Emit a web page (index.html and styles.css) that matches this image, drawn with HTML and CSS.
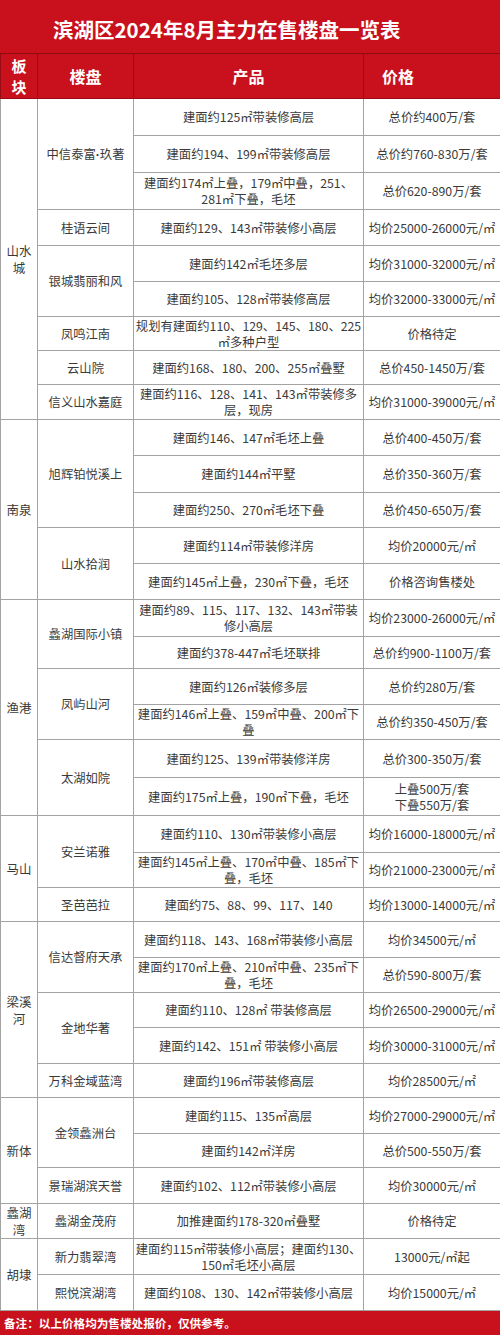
FILE: index.html
```html
<!DOCTYPE html>
<html lang="zh">
<head>
<meta charset="utf-8">
<title>滨湖区2024年8月主力在售楼盘一览表</title>
<link rel="stylesheet" href="styles.css">
</head>
<body>
<div class="sheet">
  <div class="title">滨湖区2024年8月主力在售楼盘一览表</div>
  <table class="grid">
    <colgroup>
      <col class="c-area"><col class="c-name"><col class="c-prod"><col class="c-price">
    </colgroup>
    <thead>
      <tr class="head">
        <th class="area-h">板<br>块</th>
        <th>楼盘</th>
        <th>产品</th>
        <th class="price-h">价格</th>
      </tr>
    </thead>
    <tbody>
      <tr class="h37"><td class="area" rowspan="9">山水<br>城</td><td rowspan="3">中信泰富<span class="dot">·</span>玖著</td><td>建面约125㎡带装修高层</td><td>总价约400万/套</td></tr>
      <tr class="h37"><td>建面约194、199㎡带装修高层</td><td>总价约760-830万/套</td></tr>
      <tr class="h37"><td>建面约174㎡上叠，179㎡中叠，251、<br>281㎡下叠，毛坯</td><td>总价620-890万/套</td></tr>
      <tr class="h36"><td>桂语云间</td><td>建面约129、143㎡带装修小高层</td><td>均价25000-26000元/㎡</td></tr>
      <tr class="h36"><td rowspan="2">银城翡丽和风</td><td>建面约142㎡毛坯多层</td><td>均价31000-32000元/㎡</td></tr>
      <tr class="h35"><td>建面约105、128㎡带装修高层</td><td>均价32000-33000元/㎡</td></tr>
      <tr class="h34"><td>凤鸣江南</td><td>规划有建面约110、129、145、180、225<br>㎡多种户型</td><td>价格待定</td></tr>
      <tr class="h34"><td>云山院</td><td>建面约168、180、200、255㎡叠墅</td><td>总价450-1450万/套</td></tr>
      <tr class="h35"><td>信义山水嘉庭</td><td>建面约116、128、141、143㎡带装修多<br>层，现房</td><td>均价31000-39000元/㎡</td></tr>

      <tr class="h36"><td class="area" rowspan="5">南泉</td><td rowspan="3">旭辉铂悦溪上</td><td>建面约146、147㎡毛坯上叠</td><td>总价400-450万/套</td></tr>
      <tr class="h37"><td>建面约144㎡平墅</td><td>总价350-360万/套</td></tr>
      <tr class="h35"><td>建面约250、270㎡毛坯下叠</td><td>总价450-650万/套</td></tr>
      <tr class="h36"><td rowspan="2">山水拾润</td><td>建面约114㎡带装修洋房</td><td>均价20000元/㎡</td></tr>
      <tr class="h36"><td>建面约145㎡上叠，230㎡下叠，毛坯</td><td>价格咨询售楼处</td></tr>

      <tr class="h37"><td class="area" rowspan="6">渔港</td><td rowspan="2">蠡湖国际小镇</td><td>建面约89、115、117、132、143㎡带装<br>修小高层</td><td>均价23000-26000元/㎡</td></tr>
      <tr class="h32"><td>建面约378-447㎡毛坯联排</td><td>总价约900-1100万/套</td></tr>
      <tr class="h36"><td rowspan="2">凤屿山河</td><td>建面约126㎡装修多层</td><td>总价约280万/套</td></tr>
      <tr class="h35"><td>建面约146㎡上叠、159㎡中叠、200㎡下<br>叠</td><td>总价约350-450万/套</td></tr>
      <tr class="h38"><td rowspan="2">太湖如院</td><td>建面约125、139㎡带装修洋房</td><td>总价300-350万/套</td></tr>
      <tr class="h38"><td>建面约175㎡上叠，190㎡下叠，毛坯</td><td>上叠500万/套<br>下叠550万/套</td></tr>

      <tr class="h37"><td class="area" rowspan="3">马山</td><td rowspan="2">安兰诺雅</td><td>建面约110、130㎡带装修小高层</td><td>均价16000-18000元/㎡</td></tr>
      <tr class="h35"><td>建面约145㎡上叠、170㎡中叠、185㎡下<br>叠，毛坯</td><td>均价21000-23000元/㎡</td></tr>
      <tr class="h34"><td>圣芭芭拉</td><td>建面约75、88、99、117、140</td><td>均价13000-14000元/㎡</td></tr>

      <tr class="h36"><td class="area" rowspan="5">梁溪<br>河</td><td rowspan="2">信达督府天承</td><td>建面约118、143、168㎡带装修小高层</td><td>均价34500元/㎡</td></tr>
      <tr class="h35"><td>建面约170㎡上叠、210㎡中叠、235㎡下<br>叠，毛坯</td><td>总价590-800万/套</td></tr>
      <tr class="h35"><td rowspan="2">金地华著</td><td>建面约110、128㎡ 带装修高层</td><td>均价26500-29000元/㎡</td></tr>
      <tr class="h36"><td>建面约142、151㎡ 带装修小高层</td><td>均价30000-31000元/㎡</td></tr>
      <tr class="h34"><td>万科金域蓝湾</td><td>建面约196㎡带装修高层</td><td>均价28500元/㎡</td></tr>

      <tr class="h36"><td class="area" rowspan="3">新体</td><td rowspan="2">金领蠡洲台</td><td>建面约115、135㎡高层</td><td>均价27000-29000元/㎡</td></tr>
      <tr class="h34"><td>建面约142㎡洋房</td><td>总价500-550万/套</td></tr>
      <tr class="h36"><td>景瑞湖滨天誉</td><td>建面约102、112㎡带装修小高层</td><td>均价30000元/㎡</td></tr>

      <tr class="h34"><td class="area">蠡湖<br>湾</td><td>蠡湖金茂府</td><td>加推建面约178-320㎡叠墅</td><td>价格待定</td></tr>

      <tr class="h36"><td class="area" rowspan="2">胡埭</td><td>新力翡翠湾</td><td>建面约115㎡带装修小高层；建面约130、<br>150㎡毛坯小高层</td><td>13000元/㎡起</td></tr>
      <tr class="h36"><td>熙悦滨湖湾</td><td>建面约108、130、142㎡带装修小高层</td><td>均价15000元/㎡</td></tr>
    </tbody>
  </table>
  <div class="note">备注：以上价格均为售楼处报价，仅供参考。</div>
</div>
</body>
</html>
```

FILE: styles.css
```css
html, body {
  margin: 0;
  padding: 0;
  background: #ffffff;
}

body {
  font-family: "Noto Sans CJK SC", "Noto Sans", sans-serif;
  color: #3a3a3a;
}

.sheet {
  width: 500px;
  height: 1335px;
  overflow: hidden;
  display: flex;
  flex-direction: column;
}

.title {
  height: 53px;
  box-sizing: border-box;
  padding: 5px 0 0 53px;
  display: flex;
  align-items: center;
  background: #c8111d;
  color: #ffffff;
  font-weight: 700;
  font-size: 20.5px;
  white-space: nowrap;
}

.grid {
  width: 500px;
  border-collapse: collapse;
  table-layout: fixed;
  font-size: 12.3px;
  line-height: 16px;
}

.c-area { width: 37px; }
.c-name { width: 96px; }
.c-prod { width: 230px; }
.c-price { width: 137px; }

.grid td {
  border: 1px solid #a3a3a3;
  padding: 0;
  text-align: center;
  vertical-align: middle;
  white-space: nowrap;
  overflow: hidden;
}

.dot {
  font-family: "Liberation Sans", sans-serif;
  font-weight: 700;
}

.grid .head {
  height: 45px;
  background: #c8111d;
}

.grid th {
  border: 1px solid #9a0c14;
  border-top-color: #8e0b12;
  padding: 0;
  color: #ffffff;
  font-weight: 700;
  font-size: 16px;
  line-height: 20px;
  text-align: center;
  vertical-align: middle;
}

.grid th.area-h {
  font-size: 15px;
  line-height: 21px;
}

.grid th.price-h {
  text-align: left;
  padding-left: 18px;
}

.grid td.area {
  font-size: 12.5px;
  line-height: 17px;
}

.h32 { height: 32px; }
.h34 { height: 34px; }
.h35 { height: 35px; }
.h36 { height: 36px; }
.h37 { height: 37px; }
.h38 { height: 38px; }

.note {
  flex: 1;
  display: flex;
  align-items: center;
  padding-left: 4px;
  background: #c8111d;
  color: #ffffff;
  font-weight: 700;
  font-size: 11.6px;
  white-space: nowrap;
}
```
